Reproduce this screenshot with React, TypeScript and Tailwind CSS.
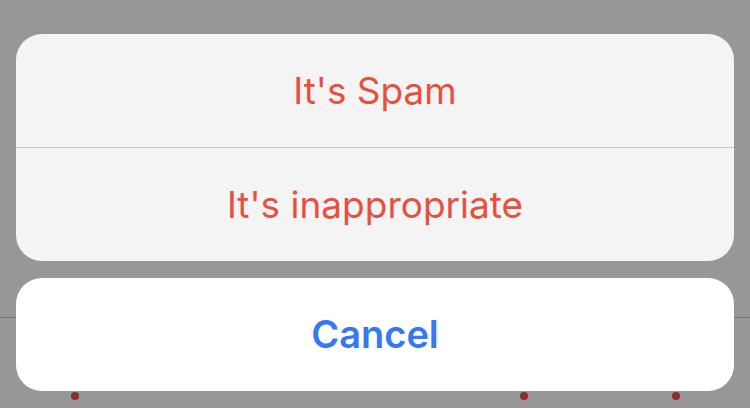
export default function App() {
  const font = { fontFamily: 'Inter, "Liberation Sans", sans-serif' }
  return (
    <div className="relative h-[408px] w-[750px] overflow-hidden bg-[#979797]" style={font}>
      {/* page content behind the dimmed overlay */}
      <div className="absolute inset-x-0 top-[317px] h-px bg-[#747474]" />
      <span className="absolute left-[71px] top-[392px] h-2 w-2 rounded-full bg-[#8e2a31]" />
      <span className="absolute left-[520px] top-[392px] h-2 w-2 rounded-full bg-[#8e2a31]" />
      <span className="absolute left-[672px] top-[392px] h-2 w-2 rounded-full bg-[#8e2a31]" />

      <div className="relative flex flex-col gap-[17px] px-4 pt-[34px]">
        <div className="flex flex-col overflow-hidden rounded-[26px] bg-[#f4f4f4]">
          <button className="flex h-[113px] items-center justify-center text-[37px] text-[#e6503f]">It's Spam</button>
          <div className="h-px bg-[#c8c8c8]" />
          <button className="flex h-[113px] items-center justify-center text-[37px] text-[#e6503f]">
            It's inappropriate
          </button>
        </div>
        <button className="flex h-[113px] items-center justify-center rounded-[26px] bg-white text-[38px] font-semibold text-[#3479f1]">
          Cancel
        </button>
      </div>
    </div>
  )
}
